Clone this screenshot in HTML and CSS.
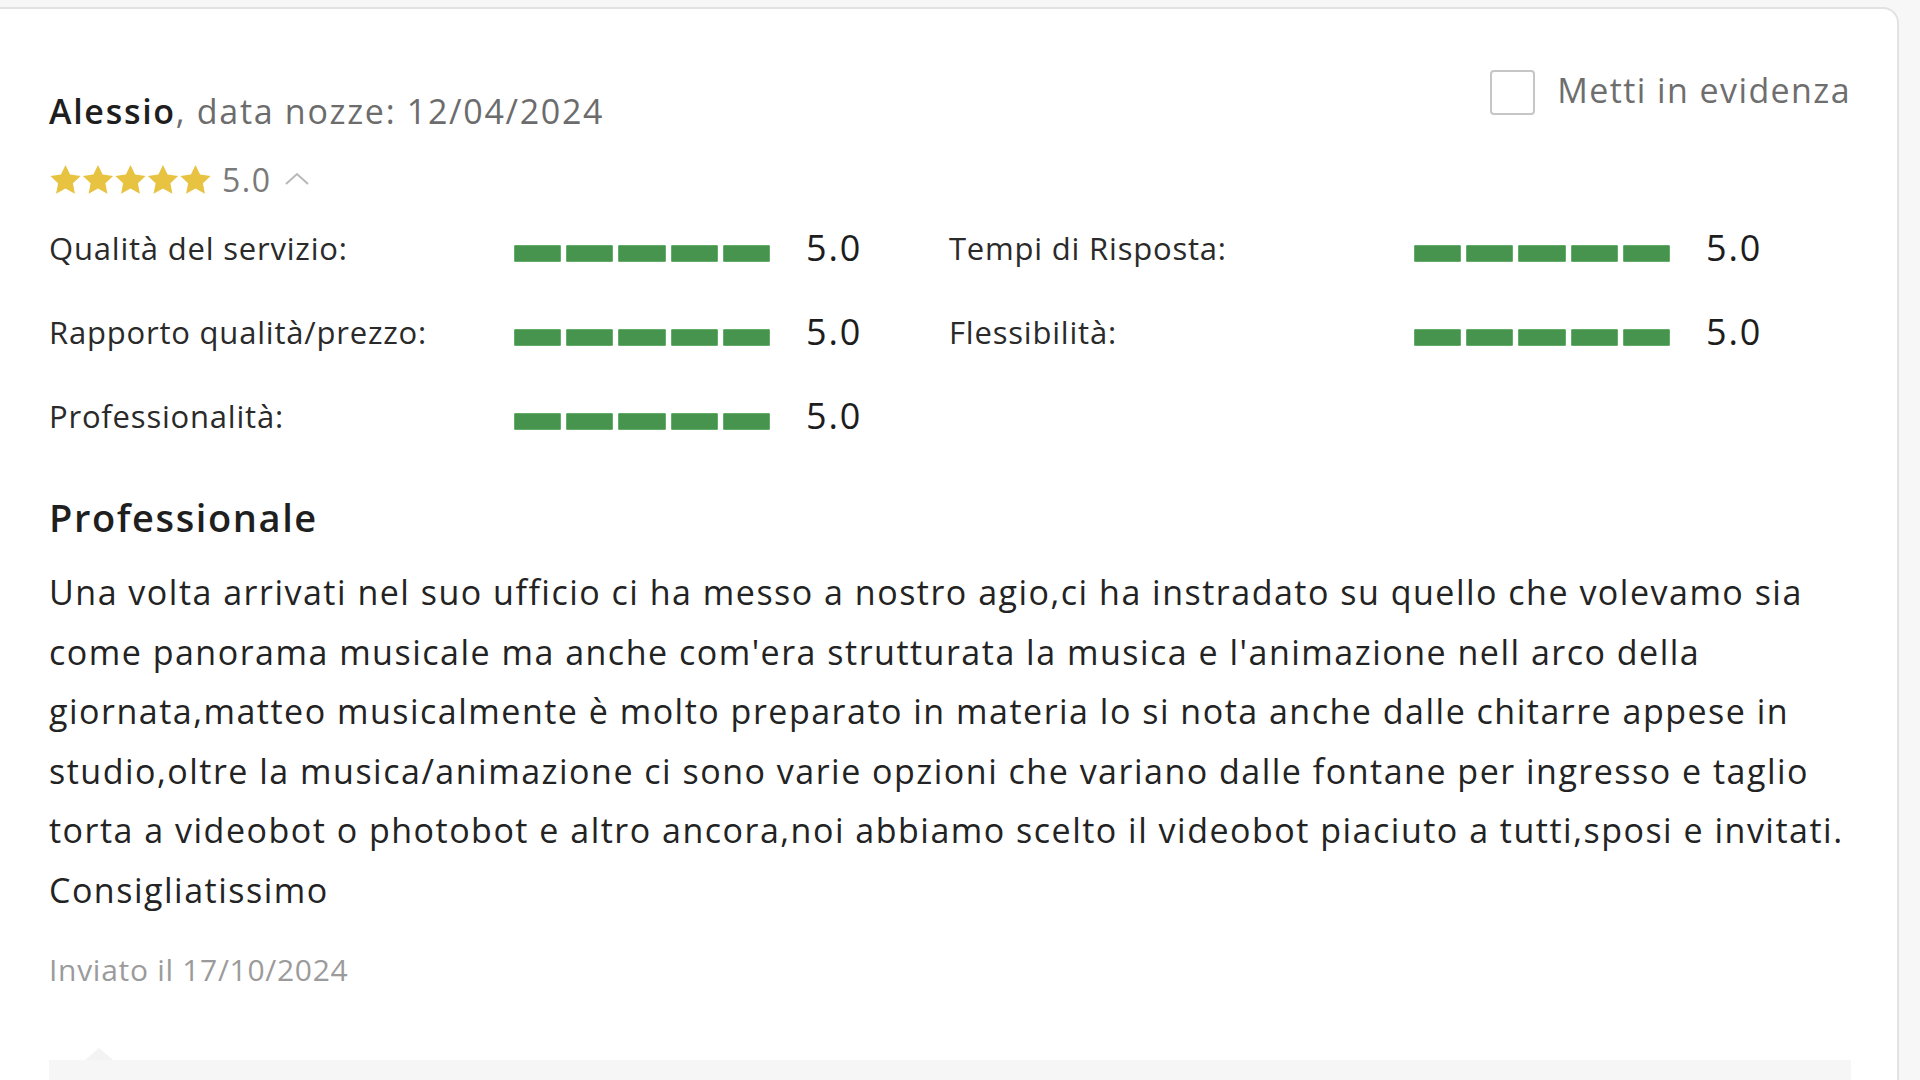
FILE: index.html
```html
<!DOCTYPE html>
<html lang="it">
<head>
<meta charset="utf-8">
<title>Recensione</title>
<link rel="stylesheet" href="styles.css">
</head>
<body>
<div class="page">
  <article class="card">
    <header class="head">
      <div class="who">
        <div class="name-line"><span class="name">Alessio</span>, data nozze: 12/04/2024</div>
        <div class="stars-line">
          <svg class="stars" width="164" height="33" viewBox="0 0 164 33" aria-hidden="true">
            <g fill="#e8c241">
              <path id="st" d="M16.5 1l4.6 9.6 10.5 1.4-7.7 7.3 2 10.4-9.4-5.1-9.4 5.1 2-10.4-7.7-7.3 10.5-1.4z"/>
              <use href="#st" x="32.5"/>
              <use href="#st" x="65"/>
              <use href="#st" x="97.5"/>
              <use href="#st" x="130"/>
            </g>
          </svg>
          <span class="avg">5.0</span>
          <svg class="chev" width="28" height="16" viewBox="0 0 28 16" aria-hidden="true">
            <path d="M3 14L14 4l11 10" fill="none" stroke="#b8b8b8" stroke-width="2"/>
          </svg>
        </div>
      </div>
      <label class="feature">
        <span class="box"></span>
        <span class="feature-text">Metti in evidenza</span>
      </label>
    </header>

    <div class="ratings">
      <div class="rating">
        <span class="label">Qualità del servizio:</span>
        <span class="bar"><i></i><i></i><i></i><i></i><i></i></span>
        <span class="val">5.0</span>
      </div>
      <div class="rating">
        <span class="label">Tempi di Risposta:</span>
        <span class="bar"><i></i><i></i><i></i><i></i><i></i></span>
        <span class="val">5.0</span>
      </div>
      <div class="rating">
        <span class="label">Rapporto qualità/prezzo:</span>
        <span class="bar"><i></i><i></i><i></i><i></i><i></i></span>
        <span class="val">5.0</span>
      </div>
      <div class="rating">
        <span class="label">Flessibilità:</span>
        <span class="bar"><i></i><i></i><i></i><i></i><i></i></span>
        <span class="val">5.0</span>
      </div>
      <div class="rating">
        <span class="label">Professionalità:</span>
        <span class="bar"><i></i><i></i><i></i><i></i><i></i></span>
        <span class="val">5.0</span>
      </div>
    </div>

    <h2 class="title">Professionale</h2>
    <p class="text">Una volta arrivati nel suo ufficio ci ha messo a nostro agio,ci ha instradato su quello che volevamo sia come panorama musicale ma anche com'era strutturata la musica e l'animazione nell arco della giornata,matteo musicalmente è molto preparato in materia lo si nota anche dalle chitarre appese in studio,oltre la musica/animazione ci sono varie opzioni che variano dalle fontane per ingresso e taglio torta a videobot o photobot e altro ancora,noi abbiamo scelto il videobot piaciuto a tutti,sposi e invitati. Consigliatissimo</p>
    <p class="sent">Inviato il 17/10/2024</p>

    <div class="reply"></div>
  </article>
</div>
</body>
</html>
```

FILE: styles.css
```css
* { box-sizing: border-box; }
html, body { margin: 0; padding: 0; }
body {
  background: #f7f7f7;
  font-family: "Open Sans", "Liberation Sans", Arial, sans-serif;
  color: #222;
  overflow: hidden;
  height: 1080px;
}
.page {
  padding-top: 7px;
  padding-right: 21px;
  height: 1080px;
}
.card {
  margin-left: -20px;
  height: 1100px;
  background: #fff;
  border: 2px solid #e2e2e2;
  border-left: none;
  border-bottom: none;
  border-radius: 0 16px 0 0;
  padding: 61px 46px 0 69px;
}
.head {
  display: flex;
  justify-content: space-between;
  align-items: flex-start;
}
.who { margin-top: 19px; }
.name-line {
  font-size: 34px;
  letter-spacing: 1.7px;
  line-height: 44px;
  color: #6c6c6c;
}
.name { color: #1e1e1e; font-weight: 600; }
.stars-line {
  display: flex;
  align-items: center;
  height: 36px;
  margin-top: 29px;
}
.stars { display: block; }
.avg {
  font-size: 32px;
  letter-spacing: 1.5px;
  color: #7a7a7a;
  margin-left: 9px;
  line-height: 36px;
}
.chev { margin-left: 11px; margin-top: -4px; }
.feature {
  display: flex;
  align-items: center;
  gap: 22px;
}
.box {
  width: 45px;
  height: 45px;
  border: 2px solid #c6c6c6;
  border-radius: 4px;
  background: #fff;
}
.feature-text {
  font-size: 34px;
  letter-spacing: 1.4px;
  color: #6e6e6e;
  margin-top: -6px;
}
.ratings {
  display: grid;
  grid-template-columns: 900px 900px;
  row-gap: 44px;
  margin-top: 32px;
}
.rating {
  display: grid;
  grid-template-columns: 465px 256px auto;
  align-items: center;
  height: 40px;
}
.label {
  font-size: 31px;
  letter-spacing: 0.8px;
  color: #2a2a2a;
  margin-top: -7px;
}
.bar {
  display: flex;
  gap: 5px;
  margin-top: 4px;
}
.bar i {
  display: block;
  width: 47.2px;
  height: 17px;
  background: #46944d;
  border: 1px solid #63ad69;
  border-radius: 1px;
}
.val {
  font-size: 36px;
  letter-spacing: 1.8px;
  font-weight: 500;
  color: #1d1d1d;
  margin-left: 36px;
  margin-top: -7px;
}
.title {
  font-size: 38px;
  letter-spacing: 1.6px;
  font-weight: 600;
  line-height: 44px;
  margin: 57px 0 0;
  color: #1f1f1f;
}
.text {
  font-size: 34px;
  letter-spacing: 1.5px;
  line-height: 59.5px;
  margin: 24px 0 0;
  width: 1840px;
  color: #232323;
}
.sent {
  font-size: 30px;
  letter-spacing: 0.7px;
  line-height: 40px;
  color: #9b9b9b;
  margin: 30px 0 0;
}
.reply {
  position: relative;
  margin-top: 70px;
  width: 1802px;
  height: 60px;
  background: #f6f6f6;
}
.reply::before {
  content: "";
  position: absolute;
  left: 36px;
  top: -12px;
  border-left: 14px solid transparent;
  border-right: 14px solid transparent;
  border-bottom: 12px solid #f3f3f3;
}
```
